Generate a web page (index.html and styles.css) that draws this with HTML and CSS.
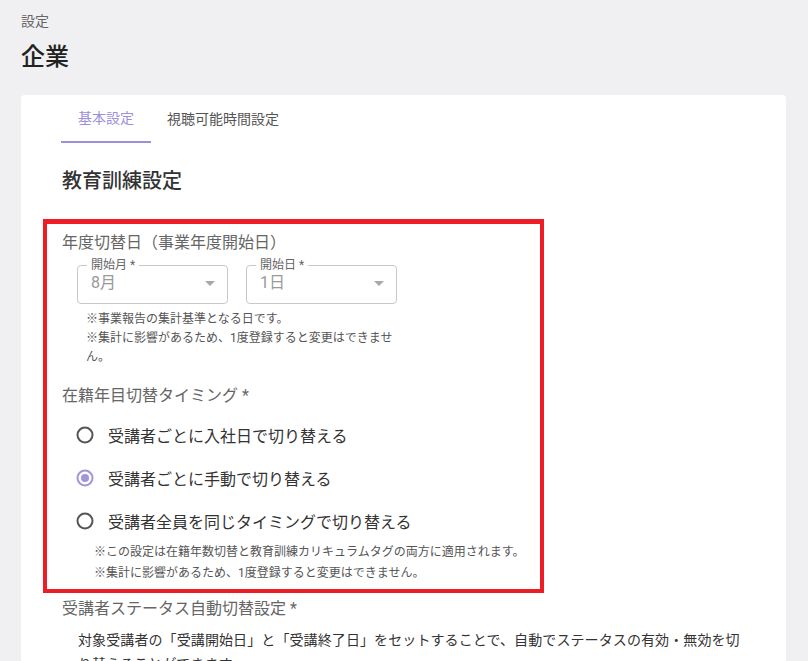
FILE: index.html
```html
<!DOCTYPE html>
<html lang="ja">
<head>
    <meta charset="UTF-8">
    <meta name="viewport" content="width=device-width, initial-scale=1.0">
    <title>設定 - 企業</title>
    <link rel="stylesheet" href="styles.css">
</head>
<body>
    <div class="breadcrumb">設定</div>
    <h1 class="page-title">企業</h1>

    <div class="card">
        <div class="tabs">
            <div class="tab active">基本設定</div>
            <div class="tab">視聴可能時間設定</div>
        </div>

        <div class="card-body">
            <h2 class="section-title">教育訓練設定</h2>

            <div class="highlight">
                <div class="field-label">年度切替日（事業年度開始日）</div>
                <div class="selects">
                    <fieldset class="select">
                        <legend>開始月 *</legend>
                        <div class="select-value">
                            <span>8月</span>
                            <svg class="arrow" width="10" height="5" viewBox="0 0 10 5"><path d="M0 0l5 5 5-5z"/></svg>
                        </div>
                    </fieldset>
                    <fieldset class="select">
                        <legend>開始日 *</legend>
                        <div class="select-value">
                            <span>1日</span>
                            <svg class="arrow" width="10" height="5" viewBox="0 0 10 5"><path d="M0 0l5 5 5-5z"/></svg>
                        </div>
                    </fieldset>
                </div>
                <div class="helper">
                    <p>※事業報告の集計基準となる日です。</p>
                    <p>※集計に影響があるため、1度登録すると変更はできません。</p>
                </div>

                <div class="field-label timing">在籍年目切替タイミング *</div>
                <div class="radios">
                    <label class="radio">
                        <svg width="20" height="20" viewBox="0 0 20 20"><circle cx="10" cy="10" r="7.5" fill="none" stroke="#555" stroke-width="2"/></svg>
                        <span>受講者ごとに入社日で切り替える</span>
                    </label>
                    <label class="radio checked">
                        <svg width="20" height="20" viewBox="0 0 20 20"><circle cx="10" cy="10" r="7.5" fill="none" stroke="#a294dd" stroke-width="2"/><circle cx="10" cy="10" r="4" fill="#a294dd"/></svg>
                        <span>受講者ごとに手動で切り替える</span>
                    </label>
                    <label class="radio">
                        <svg width="20" height="20" viewBox="0 0 20 20"><circle cx="10" cy="10" r="7.5" fill="none" stroke="#555" stroke-width="2"/></svg>
                        <span>受講者全員を同じタイミングで切り替える</span>
                    </label>
                </div>
                <div class="notes">
                    <p>※この設定は在籍年数切替と教育訓練カリキュラムタグの両方に適用されます。</p>
                    <p>※集計に影響があるため、1度登録すると変更はできません。</p>
                </div>
            </div>

            <div class="field-label outside">受講者ステータス自動切替設定 *</div>
            <p class="desc">対象受講者の「受講開始日」と「受講終了日」をセットすることで、自動でステータスの有効・無効を切<br>り替えることができます。</p>
        </div>
    </div>
</body>
</html>
```

FILE: styles.css
```css
body {
    margin: 0;
    padding: 11px 22px 0 21px;
    background: #f0f0f2;
    font-family: Roboto, "Noto Sans CJK JP", sans-serif;
    color: #333;
    overflow: hidden;
}
p {
    margin: 0;
}
.breadcrumb {
    font-size: 14px;
    line-height: 20px;
    color: #666;
}
.page-title {
    margin: 10px 0 22px;
    font-size: 24px;
    line-height: 32px;
    font-weight: 500;
    color: #222;
}
.card {
    background: #fff;
    border-radius: 4px;
    min-height: 600px;
}
.tabs {
    display: flex;
    padding-left: 40px;
}
.tab {
    height: 48px;
    line-height: 48px;
    padding: 0 16px;
    font-size: 14px;
    color: #555;
    box-sizing: border-box;
}
.tab.active {
    width: 90px;
    text-align: center;
    padding: 0;
    color: #9d8fdb;
    border-bottom: 2px solid #9d8fdb;
    line-height: 47px;
}
.card-body {
    padding: 0 22px;
}
.section-title {
    margin: 24px 0 24px 19px;
    font-size: 20px;
    line-height: 28px;
    font-weight: 500;
    color: #333;
}
.highlight {
    width: 463px;
    border: 4px solid #ee1d25;
    border-top-width: 5px;
    padding: 7px 15px 5px;
}
.field-label {
    font-size: 16px;
    line-height: 24px;
    color: #666;
}
.selects {
    display: flex;
    gap: 18px;
    margin: 3px 0 0 15px;
}
.select {
    margin: 0;
    min-width: 0;
    width: 151px;
    box-sizing: border-box;
    border: 1px solid #c8c8c8;
    border-radius: 4px;
    padding: 0 12px 9px 13px;
}
.select legend {
    font-size: 12px;
    line-height: 14px;
    color: #666;
    padding: 0 4px;
    margin-left: -4px;
}
.select-value {
    display: flex;
    align-items: center;
    justify-content: space-between;
    font-size: 16px;
    line-height: 22px;
    color: #999;
}
.arrow {
    fill: #a8a8a8;
}
.helper {
    width: 310px;
    margin: 6px 0 0 24px;
    font-size: 12px;
    line-height: 19px;
    color: #555;
}
.timing {
    margin-top: 17px;
}
.radios {
    margin-top: 5px;
    padding-left: 13px;
}
.radio {
    display: flex;
    align-items: center;
    gap: 13px;
    height: 43px;
    font-size: 16px;
    color: #333;
}
.notes {
    margin-left: 32px;
    font-size: 12px;
    line-height: 21px;
    color: #555;
}
.outside {
    margin: 4px 0 0 19px;
}
.desc {
    width: 680px;
    margin: 7px 0 0 35px;
    font-size: 14px;
    line-height: 24px;
    letter-spacing: 0.1px;
    color: #333;
}
```
